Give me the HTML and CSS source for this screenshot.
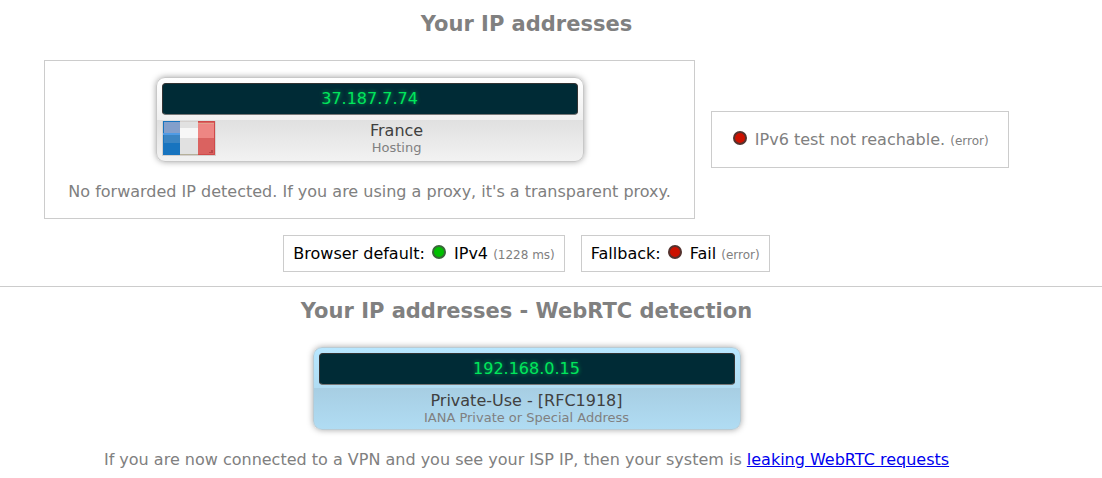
FILE: index.html
```html
<!DOCTYPE html>
<html lang="en">
<head>
<meta charset="utf-8">
<title>Your IP addresses</title>
<link rel="stylesheet" href="styles.css">
</head>
<body>
<section class="block">
<h2>Your IP addresses</h2>
<div class="row">
<div class="box box_ip">
<div class="card">
<div class="lcd">37.187.7.74</div>
<div class="card_info">
<svg class="flag" viewBox="0 0 54 35" role="img" aria-label="France">
<rect width="54" height="35" fill="#d4d0ce"/>
<rect x="1" y="0" width="17" height="34" fill="#1874bf"/>
<rect x="2" y="13" width="16" height="9" fill="#3b85c3"/>
<rect x="1" y="12" width="17" height="2" fill="#4f9be5"/>
<rect x="2" y="1" width="16" height="11" fill="#839fcb"/>
<rect x="18" y="1" width="18" height="33" fill="#e1e1e1"/>
<rect x="18" y="7" width="18" height="10" fill="#f7f7f7"/>
<rect x="36" y="0" width="17" height="34" fill="#da6260"/>
<rect x="36" y="2" width="16" height="15" fill="#ee8683"/>
<rect x="36" y="2" width="16" height="1" fill="#e3a08d"/>
<path d="M36 .500H52.500V33.500H36" fill="none" stroke="#cf4a4a"/>
<path d="M18 33.500H36" stroke="#b5b09a"/>
<path d="M51 28v4h-4v-1h2v-2h2z" fill="#b94747"/>
</svg>
<div class="place">
<div class="country">France</div>
<div class="org">Hosting</div>
</div>
</div>
</div>
<p>No forwarded IP detected. If you are using a proxy, it's a transparent proxy.</p>
</div>
<div class="box box_v6"><span class="led red"></span>IPv6 test not reachable. <small>(error)</small></div>
</div>
<div class="row row_status">
<div class="box status">Browser default: <span class="led green"></span>IPv4 <small>(1228 ms)</small></div>
<div class="box status">Fallback: <span class="led red"></span>Fail <small>(error)</small></div>
</div>
</section>
<hr>
<section class="block">
<h2>Your IP addresses - WebRTC detection</h2>
<div class="card blue">
<div class="lcd">192.168.0.15</div>
<div class="card_info">
<div class="place">
<div class="country">Private-Use - [RFC1918]</div>
<div class="org">IANA Private or Special Address</div>
</div>
</div>
</div>
<p>If you are now connected to a VPN and you see your ISP IP, then your system is <a href="#">leaking WebRTC requests</a></p>
</section>
</body>
</html>
```
FILE: styles.css
```css
body{
margin:0;
background:#fff;
color:#808080;
font:16px/20px Verdana,"DejaVu Sans",sans-serif;
}
.block{
padding:9px 49px 0 0;
text-align:center;
}
h2{
margin:0;
font-size:21px;
line-height:30px;
}
p{
margin:20px 0 0;
}
a{
color:#0000ee;
}
small{
font-size:12px;
color:#808080;
}
hr{
margin:14px 0 0;
border:0;
border-top:1px solid #ccc;
}
.row{
display:flex;
justify-content:center;
align-items:center;
gap:16px;
margin-top:21px;
}
.row_status{
margin-top:16px;
}
.box{
border:1px solid #ccc;
}
.box_ip{
padding:16px 23px;
}
.box_v6{
padding:18px 19px 16px;
}
.status{
padding:8px 9px 6px;
line-height:19px;
color:#000;
}

.card{
box-sizing:border-box;
width:428px;
max-width:100%;
margin:0 auto;
padding:5px;
border:1px solid #c8c8c8;
border-radius:9px;
background:linear-gradient(#fff,#f0f0f0 50%,#e0e0e0 50%,#f2f2f2);
box-shadow:0 0 6px rgba(0,0,0,.35);
}
.blue{
margin-top:21px;
border-color:#b9cbd4;
background:linear-gradient(#b8e7ff,#b0dcf2 50%,#a7cee3 50%,#b0dcf3);
}
.lcd{
border:1px solid #333;
border-bottom-color:#777;
border-radius:4px;
background:#002b36;
color:#00e65c;
text-shadow:0 0 4px #00a84a;
line-height:30px;
}
.card_info{
display:flex;
padding-top:6px;
}
.place{
flex:1;
}
.country{
color:#404040;
}
.org{
font-size:13px;
line-height:13px;
}
.flag{
width:54px;
height:35px;
}

.led{
display:inline-block;
box-sizing:border-box;
width:14px;
height:14px;
margin:0 8px 0 2px;
border:2px solid #555;
border-radius:50%;
}
.red{
background:#cc1100;
border-color:#54322e;
}
.green{
background:#00c000;
border-color:#3a663a;
}
```
